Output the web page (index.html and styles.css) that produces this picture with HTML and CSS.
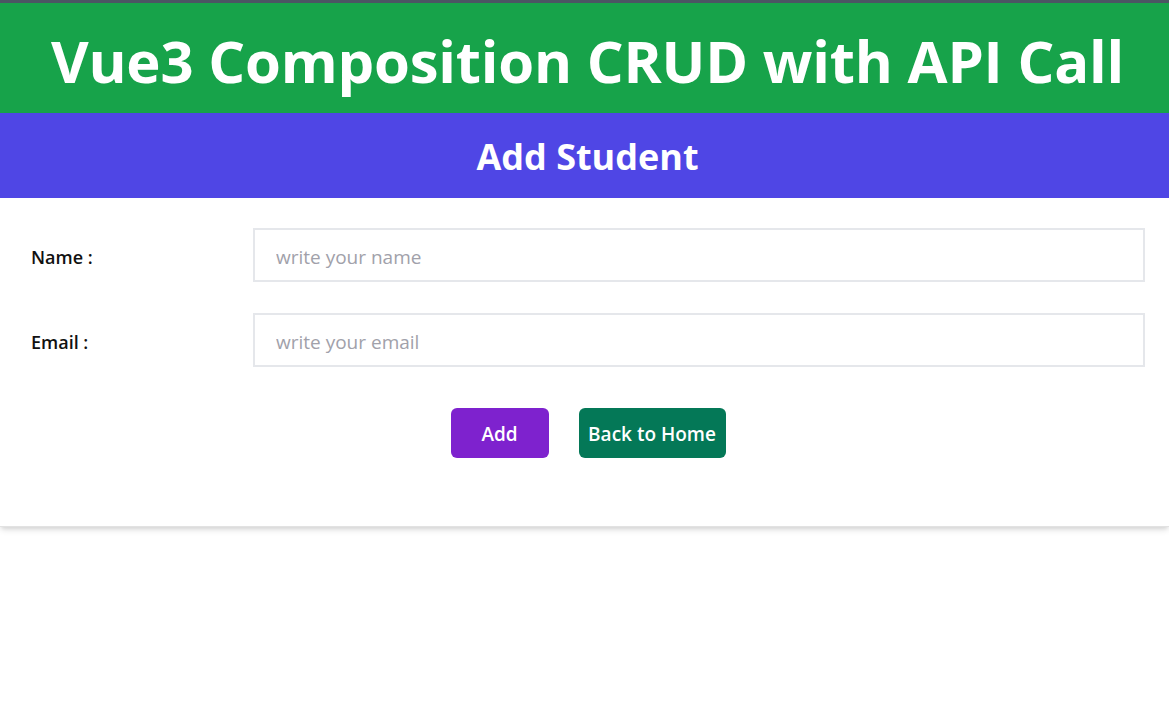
FILE: index.html
```html
<!DOCTYPE html>
<html lang="en">
<head>
<meta charset="utf-8">
<title>Vue3 Composition CRUD with API Call</title>
<link rel="stylesheet" href="styles.css">
</head>
<body>
  <header class="app-header">
    <h1 class="app-title">Vue3 Composition CRUD with API Call</h1>
  </header>
  <section class="card">
    <div class="card-head">
      <h2 class="card-title">Add Student</h2>
    </div>
    <form class="form">
      <div class="row">
        <label class="label" for="name">Name :</label>
        <input class="input" id="name" type="text" placeholder="write your name">
      </div>
      <div class="row">
        <label class="label" for="email">Email :</label>
        <input class="input" id="email" type="email" placeholder="write your email">
      </div>
      <div class="actions">
        <button type="button" class="btn btn-add">Add</button>
        <button type="button" class="btn btn-back">Back to Home</button>
      </div>
    </form>
  </section>
  <div class="page-rest"></div>
</body>
</html>
```
FILE: styles.css
```css
* { box-sizing: border-box; }
html, body { margin: 0; padding: 0; background: #fff; }
body {
  font-family: "Open Sans", "Noto Sans", sans-serif;
  color: #111;
  border-top: 3px solid #4b5563;
}
.app-header {
  background: #17a34a;
  height: 110px;
  display: flex;
  align-items: center;
  justify-content: center;
  padding-left: 6px;
}
.app-title {
  margin: 0;
  color: #fff;
  font-size: 58px;
  font-weight: 700;
  letter-spacing: -0.2px;
  line-height: 1;
  padding-top: 6px;
}
.card {
  position: relative;
  z-index: 1;
  background: #fff;
  border-bottom: 1px solid #e2e2e2;
  box-shadow: 0 4px 6px -1px rgba(0,0,0,0.12), 0 2px 4px -1px rgba(0,0,0,0.08);
}
.card-head {
  background: #4f46e5;
  height: 85px;
  display: flex;
  align-items: center;
  justify-content: center;
  padding-left: 6px;
}
.card-title {
  margin: 0;
  color: #fff;
  font-size: 36px;
  font-weight: 700;
  line-height: 1;
  padding-top: 2px;
}
.form {
  padding: 30px 24px 68px 31px;
  display: flex;
  flex-direction: column;
  gap: 31px;
}
.row {
  display: flex;
  align-items: center;
}
.label {
  width: 222px;
  flex: none;
  font-size: 18px;
  font-weight: 600;
  color: #111;
  padding-top: 3px;
}
.input {
  flex: 1;
  height: 54px;
  border: 2px solid #e5e7eb;
  padding: 3px 21px 0;
  font-family: inherit;
  font-size: 19px;
  color: #111;
  outline: none;
  background: #fff;
}
.input::placeholder { color: #a1a1aa; }
.actions {
  display: flex;
  justify-content: center;
  gap: 30px;
  margin-top: 10px;
}
.btn {
  height: 50px;
  border: none;
  border-radius: 6px;
  color: #fff;
  font-family: inherit;
  font-size: 19px;
  font-weight: 600;
  padding: 2px 0 0;
  white-space: nowrap;
  cursor: pointer;
}
.btn-add { background: #7e22ce; width: 98px; }
.btn-back { background: #047857; width: 147px; }
.page-rest { height: 40px; }
```
